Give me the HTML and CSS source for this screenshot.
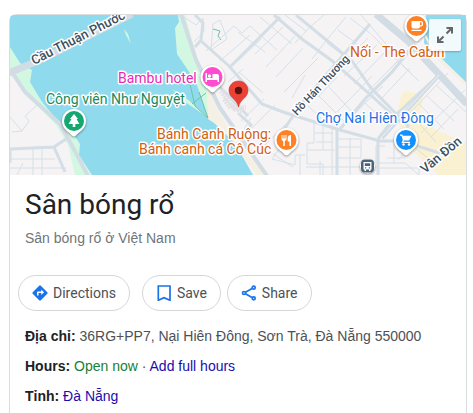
FILE: index.html
```
<!DOCTYPE html>
<html lang="vi">
<head>
<meta charset="utf-8">
<meta name="viewport" content="width=device-width, initial-scale=1">
<title>Sân bóng rổ</title>
<link rel="stylesheet" href="styles.css">
</head>
<body>
<main class="card">
  <div class="map">
    <svg class="map-art" viewBox="10 15 456 160" preserveAspectRatio="xMidYMid slice" role="img" aria-label="Map">
      <defs>
        <path id="pin" d="M0-12C-7-12-12-7-12 0C-12 5-9 9-5 11.500C-3 13-2 15.500 0 15.500C2 15.500 3 13 5 11.500C9 9 12 5 12 0C12-7 7-12 0-12Z"/>
      </defs>
      <rect class="land" x="10" y="15" width="456" height="160"/>
      <!-- river and shores -->
      <path class="water" d="M10 15H180L203 82L209 118L235 143L253 175H88L60 128L30 85L10 50Z"/>
      <path class="park" d="M10 47L20 63L32 70L30 82L42 102L62 126L72 132L80 144L79 155L92 175H75L68 145L56 125L24 92L10 72Z"/>
      <path class="park" d="M178 15H185L198 60L207 83L208 118L196 82L177 54L175 28L179 22Z"/>
      <path class="park" d="M124 29L128 34L131 44L126 35ZM172 89L186 98L209 118L188 104Z"/>
      <path class="sand" d="M207 82L216 106L234 140L269 175H256L240 152L225 130L208 119Z"/>
      <path class="water" d="M426 15H466V83L439 60L424 43Z"/>
      <path class="sand" d="M420 26L440 57L466 82V86L434 57Z"/>
      <path class="zone" d="M403 91L423 94L420 112L434 129L466 143V175H438L408 146L396 116Z"/>
      <path class="trail" d="M190 84L195 106L208 118L199 92M192 104L206 93M213 29L220 31L218 36L221 40"/>
      <!-- minor streets -->
      <g class="street">
        <path d="M10 117L22 131L12 132M22 131L29 121L25 116L37 105M10 159H55M10 168H66M33 148V175M42 148V175M17 175L23 163"/>
        <path d="M184 17L196 25L203 18M194 42L204 31L203 18M206 51L234 26L242 33L250 26M220 61L250 35M213 24L220 20L227 39L211 50L213 24M239 72L263 93M228 82L243 69M238 32L265 52M250 26L277 50M260 17L292 44M285 15L306 31M295 43L309 28L324 15M312 59L325 42L346 17M283 27L255 54M295 36L266 67M303 48L276 77M318 58L284 92M305 75L292 98M238 61L261 39"/>
        <path d="M327 43L345 57M338 30L357 44M350 18L371 34M361 15L386 44M338 68L368 38M344 76L377 45M354 84L387 50M368 91L397 62M380 100L410 68M372 35L405 68L419 81M329 87L353 113M319 96L344 121M308 106L323 120M337 77L318 97M372 76L354 95L337 112M383 86L366 102L350 119M376 93L395 113M365 103L382 119"/>
        <path d="M384 48L410 72M395 29L430 67M410 48L387 72M437 86L466 112M427 96L454 121M419 104L444 129M412 116L436 142M448 73L409 114M465 90L421 133M458 109L431 137"/>
        <path d="M314 122V143H307V164H323V175M323 126V150H307M332 127V175M315 133H333M316 142H333M323 150H335M337 158H361V139H337M350 138V175M337 147H361M306 167H377M300 155V175M305 155H295V165L272 159L285 141M273 154L293 167M238 139L251 118M385 146H376V163H405M387 158H405M394 138V163M405 163L419 175M398 160L412 145L430 160M378 168H419V175M275 105L252 128M264 99L241 121M290 120L260 150M320 161V175"/>
      </g>
      <!-- main streets -->
      <g class="road">
        <path d="M10 163V149L54 147L66 139M54 147L65 172"/>
        <path d="M195 15L203 23L201 40L195 47M201 41L229 66L262 104L283 112L340 130L380 141H402L439 153L450 151"/>
        <path d="M230 67L280 17M274 15L302 39L331 60L374 98L400 122M296 15L352 61L371 88L409 127M278 138L302 103L370 24M337 130V175M378 140V175M378 139L398 113L441 73M340 129L366 98L392 72L410 50M216 83L248 116M242 137L251 125L238 113"/>
      </g>
      <path class="shore-road" d="M10 69L25 92L60 124L70 142L88 176M181 14L196 60L220 108L267 176M382 138L440 74"/>
      <path class="avenue" d="M9 73L40 60L132 14M376 14L409 42L467 104"/>
      <path class="avenue-gap" d="M381 138L439 75"/>
      <path class="gravel" d="M221 91L235 109L246 107M224 99L231 108M230 105L242 112"/>
      <!-- labels -->
      <g class="label">
        <text class="street-name big" transform="translate(34 65) rotate(-27)">Cầu Thuận Phước</text>
        <text class="street-name" transform="translate(297 116) rotate(-47)">Hồ Hán Thương</text>
        <text class="street-name big" transform="translate(425 174) rotate(-40)">Vân Đồn</text>
        <text class="hotel" x="118" y="83">Bambu hotel</text>
        <text class="green" x="46" y="104">Công viên Như Nguyệt</text>
        <text class="food" x="157" y="139">Bánh Canh Ruộng:</text>
        <text class="food" x="139" y="154">Bánh canh cá Cô Cúc</text>
        <text class="food" x="350" y="57">Nối - The Cabin</text>
        <text class="shop" x="316" y="123">Chợ Nai Hiên Đông</text>
      </g>
      <!-- place pins -->
      <g class="pin" transform="translate(212.500 77)"><use href="#pin"/><circle r="10" fill="#ff4bd0"/><path fill="#fff" d="M-7-4H-5.500V1H0V-3H4.500Q6.500-3 6.500-1V5H5V3H-5.500V5H-7Z"/><circle cx="-3" cy="-1" r="1.700" fill="#fff"/></g>
      <g class="pin" transform="translate(74 121)"><use href="#pin"/><circle r="10" fill="#15a770"/><path fill="#fff" d="M0-7L4-2H2.500L5.500 3H1.300V6H-1.300V3H-5.500L-2.500-2H-4Z"/></g>
      <g class="pin" transform="translate(286.500 140)"><use href="#pin"/><circle r="10" fill="#ff8126"/><path fill="#fff" d="M-5-5H-4V-1.500H-3V-5H-2V-1.500H-1V-5H0V-1Q0 .500-1.700 1V6H-3.300V1Q-5 .500-5-1ZM4.500-5V6H3V1.500H1.200V-2Q1.400-5 4.500-5Z"/></g>
      <g class="pin" transform="translate(416.500 26)"><use href="#pin"/><circle r="10" fill="#ff8126"/><path fill="#fff" fill-rule="evenodd" d="M-5-5H4.500Q6.500-5 6.500-3V-1.500Q6.500.500 4.500.500H3.500Q3.500 2.500 1.500 2.500H-3Q-5 2.500-5 .500ZM3.500-3.700V-.800H4.300Q5.200-.800 5.200-1.700V-2.800Q5.200-3.700 4.300-3.700ZM-5 3.800H5V5H-5Z"/></g>
      <g class="pin" transform="translate(406 140)"><use href="#pin"/><circle r="10" fill="#1290ff"/><path fill="#fff" d="M-6-5.500H-3.600L-3-4.200H5.500L3.200.500H-2L-2.700 1.700H4V3H-4.500L-3.200.100L-4.500-4.200H-6Z"/><circle cx="-2.500" cy="4.500" r="1.200" fill="#fff"/><circle cx="3" cy="4.500" r="1.200" fill="#fff"/></g>
      <g class="pin" transform="translate(367.500 166)"><circle r="7.500"/><rect x="-6.500" y="-6.500" width="13" height="13" rx="4" fill="#48647b"/><path fill="#fff" fill-rule="evenodd" d="M-4-4H4V3.500H3V5H1.500V3.500H-1.500V5H-3V3.500H-4ZM-2.700-2.700V0H2.700V-2.700ZM-2.500 1.200V2.400H-1.300V1.200ZM1.300 1.200V2.400H2.500V1.200Z"/></g>
      <path fill="#ea4335" stroke="#c5221f" stroke-width=".5" d="M238.500 81C233 81 229 85.200 229 90.500C229 98 237 99 238.500 107C240 99 248 98 248 90.500C248 85.200 244 81 238.500 81Z"/>
      <circle cx="238.500" cy="90.500" r="3.700" fill="#5a1210"/>
    </svg>
    <button class="expand" type="button" aria-label="Expand map">
      <svg viewBox="0 0 32 32" width="32" height="32" aria-hidden="true"><path d="M17.500 14.500L23 9M17.500 9H23V14.500M14.500 17.500L9 23M9 17.500V23H14.500"/></svg>
    </button>
  </div>
  <header class="heading">
    <h1>Sân bóng rổ</h1>
    <p>Sân bóng rổ ở Việt Nam</p>
  </header>
  <div class="actions">
    <button class="pill" type="button">
      <svg class="icon" viewBox="0 0 16 16" aria-hidden="true"><path fill="#1a73e8" fill-rule="evenodd" d="M7.200.700Q8 0 8.800.700L15.300 7.200Q16 8 15.300 8.800L8.800 15.300Q8 16 7.200 15.300L.700 8.800Q0 8 .700 7.200ZM5 10.500H6.500V8H9.300V10L12 7.300L9.300 4.600V6.500H6Q5 6.500 5 7.500Z"/></svg>
      Directions
    </button>
    <button class="pill save" type="button">
      <svg class="icon" viewBox="0 0 16 16" aria-hidden="true"><path fill="none" stroke="#1a73e8" stroke-width="1.700" d="M2.300 1H14V15.300L8 12.700L2.300 15.300Z"/></svg>
      Save
    </button>
    <button class="pill" type="button">
      <svg class="icon" viewBox="0 0 16 16" aria-hidden="true"><g fill="none" stroke="#1a73e8" stroke-width="1.700"><path d="M4.500 7.200L11 3.500M4.500 8.800L11 12.500"/><circle cx="3" cy="8" r="1.500"/><circle cx="12.700" cy="2.700" r="1.500"/><circle cx="12.700" cy="13.300" r="1.500"/></g></svg>
      Share
    </button>
  </div>
  <div class="facts">
    <p><b>Địa chỉ:</b> 36RG+PP7, Nại Hiên Đông, Sơn Trà, Đà Nẵng 550000</p>
    <p><b>Hours:</b> <span class="open">Open now</span> · <a href="#hours">Add full hours</a></p>
    <p><b>Tỉnh:</b> <a href="#province">Đà Nẵng</a></p>
  </div>
</main>
</body>
</html>
```
FILE: styles.css
```
* { box-sizing: border-box; }
body {
  margin: 0;
  padding: 14px 6px 0 9px;
  background: #fff;
  color: #4d5156;
  font: 14px/20px "Liberation Sans", Arial, sans-serif;
}
.card {
  border: 1px solid #dadce0;
  border-bottom: 0;
  border-radius: 8px 8px 0 0;
  min-height: calc(100vh - 14px);
}
.map {
  position: relative;
  height: 160px;
  overflow: hidden;
  border-radius: 4px 0 0 0;
}
.map-art { display: block; width: 100%; height: 100%; }
.land { fill: #f5f3f4; }
.water { fill: #90daee; }
.park { fill: #d3f8e2; }
.sand { fill: #f5f0e4; }
.zone { fill: #faf0d2; }
.trail { fill: none; stroke: #6fc2a5; }
.street { fill: none; stroke: #d5e0e8; stroke-width: 1; }
.road { fill: none; stroke: #d3dee6; stroke-width: 3; }
.shore-road { fill: none; stroke: #d1dce4; stroke-width: 4; }
.avenue { fill: none; stroke: #d1dce4; stroke-width: 7; }
.avenue-gap { fill: none; stroke: #f0f3f5; stroke-width: 1; }
.gravel { fill: none; stroke: #e2e2e6; stroke-width: 5; stroke-dasharray: 2 1; }
.label {
  font: 14px Roboto, sans-serif;
  stroke: #fff;
  stroke-width: 3;
  stroke-linejoin: round;
  paint-order: stroke;
}
.street-name { font-size: 11px; font-weight: 500; fill: #3d4f60; }
.street-name.big { font-size: 13px; }
.hotel { fill: #e52bb8; }
.green { fill: #188a60; }
.food { fill: #d2600f; }
.shop { fill: #1f73e8; }
.pin { fill: #fff; filter: drop-shadow(0 1px 1px rgb(0 0 0 / 40%)); }
.expand {
  position: absolute;
  top: 4px;
  right: 5px;
  width: 32px;
  height: 32px;
  padding: 0;
  border: 0;
  border-radius: 2px;
  background: rgb(255 255 255 / 87%);
  box-shadow: 0 1px 2px rgb(0 0 0 / 25%);
}
.expand svg { display: block; fill: none; stroke: #666; stroke-width: 2; }
.heading { padding: 12px 15px 0; }
h1 {
  margin: 0;
  color: #202124;
  font: 400 28px/36px Roboto, sans-serif;
}
.heading p { margin: 5px 0 0; color: #70757a; }
.actions { display: flex; padding: 27px 8px 0; gap: 6px; }
.pill {
  display: flex;
  align-items: center;
  gap: 5px;
  height: 36px;
  padding: 0 13px;
  border: 1px solid #d4d6da;
  border-radius: 18px;
  background: #fff;
  color: #4d5156;
  font: 14px/20px Roboto, sans-serif;
}
.save { margin-left: 6px; }
.icon { width: 16px; height: 16px; }
.facts { padding: 15px 15px 0; }
.facts p { margin: 0 0 10px; }
.facts b { color: #202124; }
.open { color: #188038; }
a { color: #1a0dab; text-decoration: none; }
```
